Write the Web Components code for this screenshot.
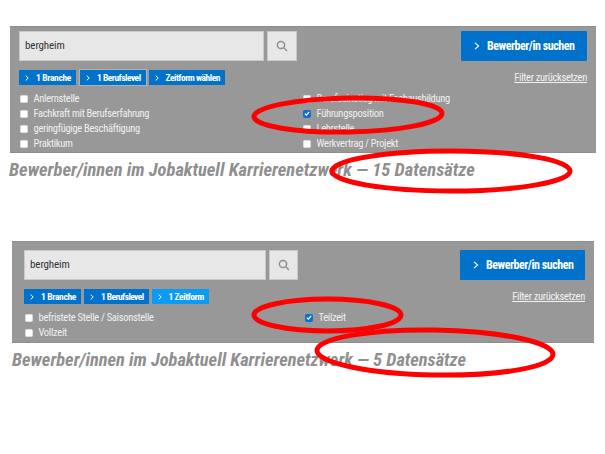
<!DOCTYPE html>
<html lang="de"><head><meta charset="utf-8"><title>Bewerber</title>
<style>
html,body{margin:0;padding:0;background:#fff}
body{width:605px;height:454px;overflow:hidden;position:relative;font-family:Roboto,"Liberation Sans",sans-serif}
</style></head><body>
<template id="t-panel"><style>
:host{display:block}
.box{background:#989898;border-top:1px solid #8d8d8d;border-bottom:1px solid #8d8d8d;padding:var(--pt,4px) 9px 0 var(--pl,9px);box-sizing:border-box;height:var(--h,126px);overflow:hidden}
.top{display:flex;height:30px}
.input{width:var(--iw,245px);box-sizing:border-box;background:#e7e7e7;border:1px solid #c9c9c9;font:11px/28px Roboto,sans-serif;font-stretch:75%;letter-spacing:-.1px;color:#333;padding-left:5px}
.sbtn{width:var(--sw,30px);margin-left:3px;box-sizing:border-box;background:#e7e7e7;border:1px solid #c9c9c9;display:flex;align-items:center;justify-content:center}
.go{margin-left:auto;width:var(--gw,126px);background:#0072cc;color:#fff;display:flex;align-items:center;gap:7px;padding-left:13px;box-sizing:border-box;font:700 12px/30px Roboto,sans-serif;font-stretch:75%;letter-spacing:-.45px;white-space:nowrap;border-radius:1px}
.go svg{flex:none}
.mid{display:flex;align-items:center;margin-top:8px;height:17px}
.chips{display:flex;gap:3px;align-items:center}
a{margin-left:auto;color:#f2f2f2;font:10.5px/15px Roboto,sans-serif;font-stretch:75%;letter-spacing:-.3px;text-decoration:underline;white-space:nowrap}
.list{display:grid;grid-template-columns:var(--col,283px) 1fr;margin-top:var(--lm,6px);grid-auto-rows:15px;padding-left:1px}
</style><div class="box"><div class="top"><div class="input"><slot name="q"></slot></div><div class="sbtn"><svg width="12" height="12" viewBox="0 0 12 12" fill="none" stroke="#8f8f8f" stroke-width="1.5"><circle cx="5" cy="5" r="3.6"/><path d="M7.8 7.8 11 11"/></svg></div><div class="go"><svg width="6" height="8" viewBox="0 0 6 8" fill="none" stroke="#fff" stroke-width="1.1"><path d="M1 .8 4.6 4 1 7.2"/></svg><span>Bewerber/in suchen</span></div></div>
<div class="mid"><div class="chips"><slot name="chip"></slot></div><a href="#">Filter zurücksetzen</a></div>
<div class="list"><slot></slot></div></div></template>
<template id="t-chip"><style>
:host{display:inline-flex;align-items:center;box-sizing:border-box;height:15px;background:var(--bg,#0072cc);color:#fff;font:700 9.5px/15px Roboto,sans-serif;font-stretch:75%;letter-spacing:var(--ls,-.35px);padding:0 5px 0 6px;white-space:nowrap;gap:7px}
:host([ring]){outline:1px solid #a9b3ba;margin:0 0 0 1px}
:host([light]){--bg:#0a9cf2}
svg{flex:none}
</style><svg width="4" height="6" viewBox="0 0 4 6" fill="none" stroke="#fff" stroke-width="1"><path d="M.7.6 3.2 3 .7 5.4"/></svg><slot></slot></template>
<template id="t-check"><style>
:host{display:flex;align-items:center;height:15px;color:#f0f0f0;font:10.5px/15px Roboto,sans-serif;font-stretch:75%;letter-spacing:-.3px;white-space:nowrap}
.b{width:8px;height:8px;box-sizing:border-box;background:#fff;border-radius:1.5px;margin-right:5.5px;flex:none;display:flex;border:.5px solid #ddd;align-items:center;justify-content:center}
:host([on]) .b{background:#0a6fd6;border-color:#0a6fd6}
svg{display:none}
:host([on]) svg{display:block}
</style><span class="b"><svg width="7" height="7" viewBox="0 0 7 7" fill="none" stroke="#fff" stroke-width="1.4"><path d="M1 3.6 2.8 5.4 6 1.5"/></svg></span><slot></slot></template>
<template id="t-head"><style>
:host{display:block;font:italic 700 var(--fs,18.5px)/24px Roboto,sans-serif;font-stretch:75%;color:#8f8f8f;white-space:nowrap}
</style><slot></slot></template>
<template id="t-ring"><style>
:host{position:absolute;display:block}
svg{display:block;overflow:visible;width:100%;height:100%}
</style><svg><ellipse fill="none" stroke="#f00" stroke-width="5"/></svg></template>

<search-panel style="margin:26px 0 0 10px;width:586px;--h:127px;--iw:245px;--pt:4px;--pl:9px;--col:283px;--lm:5px;--gw:126px">
<span slot="q">bergheim</span>
<filter-chip slot="chip">1 Branche</filter-chip><filter-chip slot="chip" ring style="--ls:-.5px">1 Berufslevel</filter-chip><filter-chip slot="chip" style="--ls:-.5px">Zeitform wählen</filter-chip>
<check-item>Anlernstelle</check-item><check-item>Berufseinstieg mit Fachausbildung</check-item>
<check-item>Fachkraft mit Berufserfahrung</check-item><check-item on>Führungsposition</check-item>
<check-item>geringfügige Beschäftigung</check-item><check-item>Lehrstelle</check-item>
<check-item>Praktikum</check-item><check-item>Werkvertrag / Projekt</check-item>
</search-panel>
<result-head style="margin:5px 0 0 9px;--fs:18.5px">Bewerber/innen im Jobaktuell Karrierenetzwerk — 15 Datensätze</result-head>

<search-panel style="margin:59px 0 0 12px;width:582px;--h:102px;--iw:242px;--sw:29px;--pt:8px;--pl:12px;--col:280px;--lm:5px;--gw:125px">
<span slot="q">bergheim</span>
<filter-chip slot="chip">1 Branche</filter-chip><filter-chip slot="chip" style="--ls:-.58px">1 Berufslevel</filter-chip><filter-chip slot="chip" light style="--ls:-.45px">1 Zeitform</filter-chip>
<check-item>befristete Stelle / Saisonstelle</check-item><check-item on>Teilzeit</check-item>
<check-item>Vollzeit</check-item>
</search-panel>
<result-head style="margin:5px 0 0 12px;--fs:18.4px">Bewerber/innen im Jobaktuell Karrierenetzwerk — 5 Datensätze</result-head>

<mark-ring x="254" y="98" w="188" h="34" rot="-1"></mark-ring>
<mark-ring x="332" y="151" w="238" h="40" rot="0"></mark-ring>
<mark-ring x="254" y="299" w="147" h="32" rot="0"></mark-ring>
<mark-ring x="317" y="330" w="236" h="45" rot="1"></mark-ring>
<script>
function def(name,tid,extra){customElements.define(name,class extends HTMLElement{constructor(){super();this.attachShadow({mode:'open'}).appendChild(document.getElementById(tid).content.cloneNode(true))}connectedCallback(){extra&&extra(this)}})}
def('search-panel','t-panel');def('filter-chip','t-chip');def('check-item','t-check');def('result-head','t-head');
def('mark-ring','t-ring',el=>{const g=k=>+el.getAttribute(k);const [x,y,w,h,r]=['x','y','w','h','rot'].map(g);
el.style.cssText=`left:${x}px;top:${y}px;width:${w}px;height:${h}px`;
const e=el.shadowRoot.querySelector('ellipse');e.setAttribute('cx',w/2);e.setAttribute('cy',h/2);e.setAttribute('rx',w/2);e.setAttribute('ry',h/2);e.setAttribute('transform',`rotate(${r} ${w/2} ${h/2})`)});
</script>
</body></html>
